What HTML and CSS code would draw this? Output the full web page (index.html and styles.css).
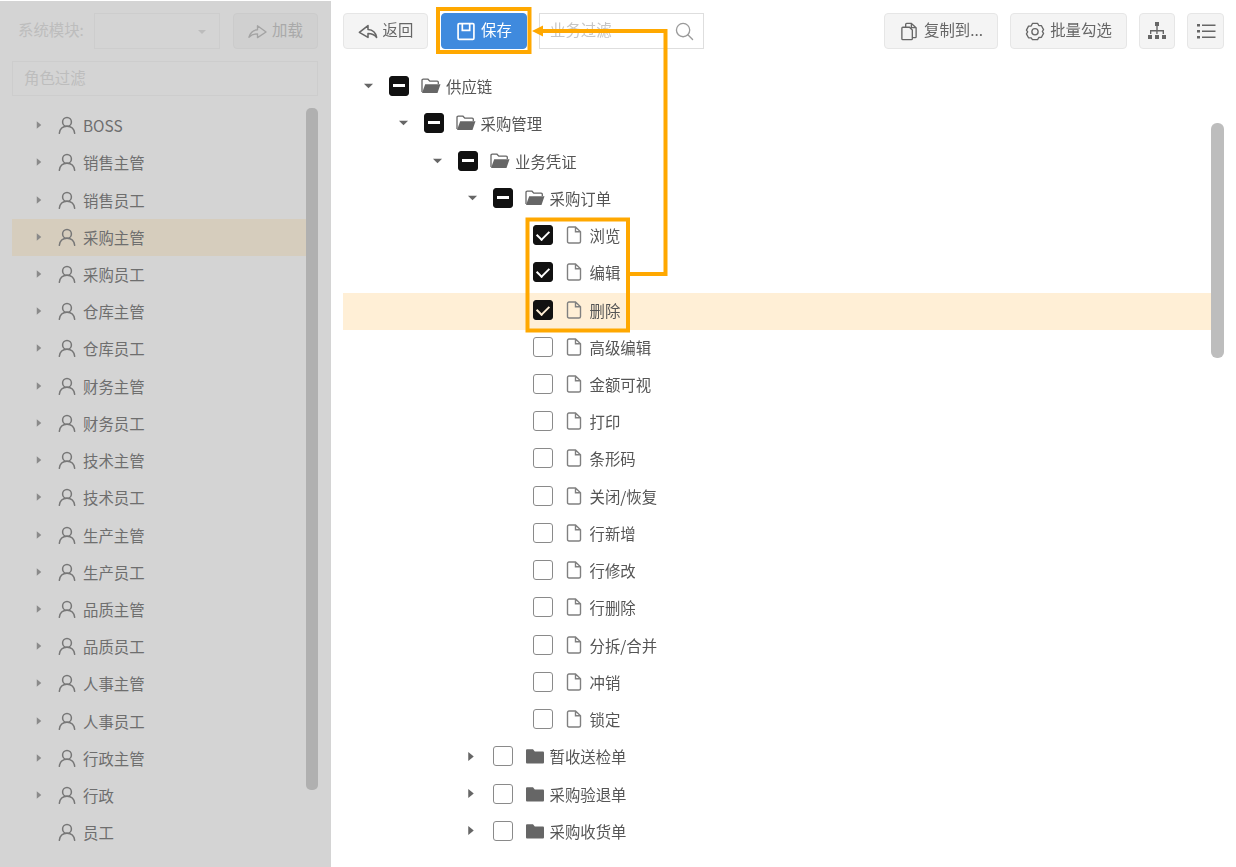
FILE: index.html
```html
<!DOCTYPE html>
<html lang="zh-CN">
<head>
<meta charset="utf-8">
<title>权限设置</title>
<link rel="stylesheet" href="styles.css">
</head>
<body>
<svg class="defs" width="0" height="0">
  <symbol id="user" viewBox="0 0 20 20"><circle cx="10" cy="6.600" r="4.900" fill="none" stroke="currentColor" stroke-width="1.700"/><path d="M1.500 19.200c.6-5 3.800-7.800 8.500-7.800s7.900 2.800 8.500 7.800" fill="none" stroke="currentColor" stroke-width="1.700" stroke-linecap="round"/></symbol>
  <symbol id="right" viewBox="0 0 8 12"><path d="M1 1 7 6l-6 5z" fill="currentColor"/></symbol>
  <symbol id="down" viewBox="0 0 12 8"><path d="M1 1.500h10L6 6.500z" fill="currentColor"/></symbol>
  <symbol id="open" viewBox="0 0 20 16"><path d="M1 14V2.500C1 1.700 1.500 1.200 2.300 1.200H7l1.800 2h7.400c.7 0 1.100.4 1.100 1.100V6" fill="none" stroke="currentColor" stroke-width="1.300"/><path d="M1 15 4.200 6.300h15.300L16.500 15z" fill="currentColor"/></symbol>
  <symbol id="closed" viewBox="0 0 20 16"><path d="M1 2.500c0-.8.500-1.300 1.300-1.300H8l1.800 2.200h7.900c.8 0 1.300.5 1.300 1.300v9.500c0 .8-.5 1.300-1.300 1.300H2.300c-.8 0-1.300-.5-1.300-1.300z" fill="currentColor"/></symbol>
  <symbol id="doc" viewBox="0 0 16 18"><path d="M3 1h6.500L14.500 5.800V15.500c0 .9-.6 1.500-1.500 1.500H3c-.9 0-1.500-.6-1.500-1.500V2.500C1.500 1.600 2.100 1 3 1zM9.500 1v4.800h5" fill="none" stroke="currentColor" stroke-width="1.400"/></symbol>
  <symbol id="share" viewBox="0 0 22 18"><path d="M1.500 10 11 2.500v4.200c5 .3 8.500 3 9.500 8.800-2.500-3.200-5.500-4.300-9.500-4.300v4.300z" fill="none" stroke="currentColor" stroke-width="1.700" stroke-linejoin="round"/></symbol>
</svg>

<div class="app">
  <aside class="side">
    <div class="side-bar">
      <span class="side-label">系统模块:</span>
      <span class="side-select"><i class="select-caret"></i></span>
      <button class="side-btn"><svg class="ic-load" viewBox="0 0 20 16"><path d="M1 14.500c1.500-5 4.500-7.500 9-7.800V2.500l9 6.500-9 6v-4c-3.500 0-6.500 1-9 3.500z" fill="none" stroke="currentColor" stroke-width="1.400" stroke-linejoin="round"/></svg><span class="lift">加载</span></button>
    </div>
    <div class="side-filter">角色过滤</div>
    <ul class="roles">
      <li class="role"><svg class="r-caret"><use href="#right"/></svg><svg class="r-user"><use href="#user"/></svg>BOSS</li>
      <li class="role"><svg class="r-caret"><use href="#right"/></svg><svg class="r-user"><use href="#user"/></svg>销售主管</li>
      <li class="role"><svg class="r-caret"><use href="#right"/></svg><svg class="r-user"><use href="#user"/></svg>销售员工</li>
      <li class="role role-on"><svg class="r-caret"><use href="#right"/></svg><svg class="r-user"><use href="#user"/></svg>采购主管</li>
      <li class="role"><svg class="r-caret"><use href="#right"/></svg><svg class="r-user"><use href="#user"/></svg>采购员工</li>
      <li class="role"><svg class="r-caret"><use href="#right"/></svg><svg class="r-user"><use href="#user"/></svg>仓库主管</li>
      <li class="role"><svg class="r-caret"><use href="#right"/></svg><svg class="r-user"><use href="#user"/></svg>仓库员工</li>
      <li class="role"><svg class="r-caret"><use href="#right"/></svg><svg class="r-user"><use href="#user"/></svg>财务主管</li>
      <li class="role"><svg class="r-caret"><use href="#right"/></svg><svg class="r-user"><use href="#user"/></svg>财务员工</li>
      <li class="role"><svg class="r-caret"><use href="#right"/></svg><svg class="r-user"><use href="#user"/></svg>技术主管</li>
      <li class="role"><svg class="r-caret"><use href="#right"/></svg><svg class="r-user"><use href="#user"/></svg>技术员工</li>
      <li class="role"><svg class="r-caret"><use href="#right"/></svg><svg class="r-user"><use href="#user"/></svg>生产主管</li>
      <li class="role"><svg class="r-caret"><use href="#right"/></svg><svg class="r-user"><use href="#user"/></svg>生产员工</li>
      <li class="role"><svg class="r-caret"><use href="#right"/></svg><svg class="r-user"><use href="#user"/></svg>品质主管</li>
      <li class="role"><svg class="r-caret"><use href="#right"/></svg><svg class="r-user"><use href="#user"/></svg>品质员工</li>
      <li class="role"><svg class="r-caret"><use href="#right"/></svg><svg class="r-user"><use href="#user"/></svg>人事主管</li>
      <li class="role"><svg class="r-caret"><use href="#right"/></svg><svg class="r-user"><use href="#user"/></svg>人事员工</li>
      <li class="role"><svg class="r-caret"><use href="#right"/></svg><svg class="r-user"><use href="#user"/></svg>行政主管</li>
      <li class="role"><svg class="r-caret"><use href="#right"/></svg><svg class="r-user"><use href="#user"/></svg>行政</li>
      <li class="role"><span class="r-caret"></span><svg class="r-user"><use href="#user"/></svg>员工</li>
    </ul>
    <div class="side-scroll"></div>
  </aside>

  <main class="main">
    <div class="toolbar">
      <button class="btn btn-back"><svg class="ic" viewBox="0 0 22 18"><use href="#share"/></svg><span class="lift">返回</span></button>
      <button class="btn btn-save"><svg class="ic" viewBox="0 0 18 18"><path d="M2.500 1.500h13c.6 0 1 .4 1 1v13c0 .6-.4 1-1 1h-13c-.6 0-1-.4-1-1v-13c0-.6.400-1 1-1zM5.500 1.500v6.500h7V1.500" fill="none" stroke="currentColor" stroke-width="1.600"/></svg><span class="lift">保存</span></button>
      <div class="search"><span class="search-ph lift">业务过滤</span><svg class="ic-search" viewBox="0 0 20 20"><circle cx="8.500" cy="8.500" r="7" fill="none" stroke="currentColor" stroke-width="1.400"/><path d="m13.500 13.500 5 5" stroke="currentColor" stroke-width="1.400" stroke-linecap="round"/></svg></div>
      <span class="spacer"></span>
      <button class="btn btn-copy"><svg class="ic" viewBox="0 0 18 20"><path d="M2.500 5.500h7l3 3v9c0 .6-.4 1-1 1h-9c-.6 0-1-.4-1-1v-11c0-.6.400-1 1-1zM5.500 5V2.500c0-.6.400-1 1-1h5l5 4.500v9.500c0 .6-.4 1-1 1h-3.500M11.500 1.500V6h5" fill="none" stroke="currentColor" stroke-width="1.400"/></svg><span class="lift">复制到...</span></button>
      <button class="btn btn-batch"><svg class="ic" viewBox="0 0 20 20"><path d="M7.300 1.500h5.400l1.300 2.200 2.800.2 2.200 4.100-1.300 2 1.300 2-2.200 4.100-2.800.2-1.300 2.200H7.300L6 16.800l-2.800-.2L1 12.500 2.300 10.500 1 8.500 3.200 4.400 6 4.200z" fill="none" stroke="currentColor" stroke-width="1.400" stroke-linejoin="round"/><circle cx="10" cy="10.300" r="3.300" fill="none" stroke="currentColor" stroke-width="1.400"/></svg><span class="lift">批量勾选</span></button>
      <button class="btn btn-icon btn-org"><svg class="ic-tool" viewBox="0 0 20 18"><path d="M8 0h4v4H8zM1 13h4v4H1zM8 13h4v4H8zM15 13h4v4h-4zM9.300 4h1.400v4H17v4h-1.400V9.400h-5V12H9.300V9.400h-5V12H3V8h6.300z" fill="currentColor"/></svg></button>
      <button class="btn btn-icon"><svg class="ic-tool" viewBox="0 0 20 18"><path d="M1 2h3v2.500H1zM6 2.500h13.500v1.500H6zM1 8h3v2.500H1zM6 8.500h13.500V10H6zM1 14h3v2.500H1zM6 14.500h13.500V16H6z" fill="currentColor"/></svg></button>
    </div>

    <ul class="tree">
      <li class="node l0"><svg class="t-caret"><use href="#down"/></svg><span class="cb cb-mid"></span><svg class="t-folder"><use href="#open"/></svg>供应链</li>
      <li class="node l1"><svg class="t-caret"><use href="#down"/></svg><span class="cb cb-mid"></span><svg class="t-folder"><use href="#open"/></svg>采购管理</li>
      <li class="node l2"><svg class="t-caret"><use href="#down"/></svg><span class="cb cb-mid"></span><svg class="t-folder"><use href="#open"/></svg>业务凭证</li>
      <li class="node l3"><svg class="t-caret"><use href="#down"/></svg><span class="cb cb-mid"></span><svg class="t-folder"><use href="#open"/></svg>采购订单</li>
      <li class="node leaf"><span class="cb cb-on"></span><svg class="t-doc"><use href="#doc"/></svg>浏览</li>
      <li class="node leaf"><span class="cb cb-on"></span><svg class="t-doc"><use href="#doc"/></svg>编辑</li>
      <li class="node leaf node-on"><span class="cb cb-on"></span><svg class="t-doc"><use href="#doc"/></svg>删除</li>
      <li class="node leaf"><span class="cb"></span><svg class="t-doc"><use href="#doc"/></svg>高级编辑</li>
      <li class="node leaf"><span class="cb"></span><svg class="t-doc"><use href="#doc"/></svg>金额可视</li>
      <li class="node leaf"><span class="cb"></span><svg class="t-doc"><use href="#doc"/></svg>打印</li>
      <li class="node leaf"><span class="cb"></span><svg class="t-doc"><use href="#doc"/></svg>条形码</li>
      <li class="node leaf"><span class="cb"></span><svg class="t-doc"><use href="#doc"/></svg>关闭/恢复</li>
      <li class="node leaf"><span class="cb"></span><svg class="t-doc"><use href="#doc"/></svg>行新增</li>
      <li class="node leaf"><span class="cb"></span><svg class="t-doc"><use href="#doc"/></svg>行修改</li>
      <li class="node leaf"><span class="cb"></span><svg class="t-doc"><use href="#doc"/></svg>行删除</li>
      <li class="node leaf"><span class="cb"></span><svg class="t-doc"><use href="#doc"/></svg>分拆/合并</li>
      <li class="node leaf"><span class="cb"></span><svg class="t-doc"><use href="#doc"/></svg>冲销</li>
      <li class="node leaf"><span class="cb"></span><svg class="t-doc"><use href="#doc"/></svg>锁定</li>
      <li class="node l3"><svg class="t-caret t-caret-r"><use href="#right"/></svg><span class="cb"></span><svg class="t-folder"><use href="#closed"/></svg>暂收送检单</li>
      <li class="node l3"><svg class="t-caret t-caret-r"><use href="#right"/></svg><span class="cb"></span><svg class="t-folder"><use href="#closed"/></svg>采购验退单</li>
      <li class="node l3"><svg class="t-caret t-caret-r"><use href="#right"/></svg><span class="cb"></span><svg class="t-folder"><use href="#closed"/></svg>采购收货单</li>
    </ul>
    <div class="main-scroll"></div>
  </main>
</div>

<svg class="marks" viewBox="0 0 1236 867">
  <rect x="438" y="9" width="91.500" height="43" fill="none" stroke="#ffa800" stroke-width="4"/>
  <rect x="527.500" y="219.500" width="100.500" height="111" fill="none" stroke="#ffa800" stroke-width="4"/>
  <path d="M630 274H665.500V31H542" fill="none" stroke="#ffa800" stroke-width="4"/>
  <path d="M532 31 543 25.500V36.500z" fill="#ffa800"/>
</svg>
</body>
</html>
```
FILE: styles.css
```css
* { box-sizing: border-box; }
html, body { margin: 0; padding: 0; }
body {
  width: 1236px;
  height: 867px;
  overflow: hidden;
  background: #fff;
  font-family: "Noto Sans CJK SC", "Noto Sans", sans-serif;
  font-size: 15.400px;
  color: #555;
}
ul { list-style: none; margin: 0; padding: 0; }
button { font: inherit; cursor: pointer; }
.defs { position: absolute; }
.app { display: flex; height: 866px; margin-top: 1px; filter: blur(0.35px); }
.lift { margin-bottom: 4px; }

/* left panel (dimmed) */
.side {
  position: relative;
  flex: 0 0 331px;
  background: #d4d4d4;
  padding: 12px 13px 0 12px;
  color: #6e6e6e;
}
.side-bar { display: flex; align-items: center; height: 36px; }
.side-label { width: 82px; padding: 0 0 5px 6px; color: #bdbdbd; white-space: nowrap; }
.side-select {
  position: relative;
  width: 126px;
  height: 36px;
  border: 1px solid #cdcdcd;
}
.select-caret {
  position: absolute;
  right: 13px;
  top: 16px;
  border: 4px solid transparent;
  border-top: 4px solid #bcbcbc;
}
.side-btn {
  display: flex;
  align-items: center;
  justify-content: center;
  gap: 5px;
  width: 85px;
  height: 36px;
  margin-left: 13px;
  background: #d0d0d0;
  border: 1px solid #cbcbcb;
  border-radius: 4px;
  color: #a9a9a9;
  padding: 0;
}
.ic-load { width: 19px; height: 16px; color: #a3a3a3; }
.side-filter {
  height: 35px;
  margin-top: 12px;
  padding-left: 11px;
  line-height: 31px;
  border: 1px solid #cdcdcd;
  color: #bdbdbd;
}
.roles { margin-top: 11px; }
.role {
  display: flex;
  align-items: center;
  height: 37.220px;
  width: 294px;
  padding: 0 0 1px 24px;
}
.role-on { background: #d6cdbd; }
.r-caret { flex: none; width: 6px; height: 10px; color: #8a8a8a; }
.r-user { flex: none; width: 18px; height: 18px; margin: 0 7px 0 16px; color: #777; }
.side-scroll {
  position: absolute;
  left: 306px;
  top: 107px;
  width: 12px;
  height: 682px;
  border-radius: 5px;
  background: #b0b0b0;
}

/* right panel */
.main { position: relative; flex: 1; padding: 12px 12px 0 12px; }
.toolbar { display: flex; align-items: stretch; height: 36px; }
.spacer { flex: 1; }
.btn {
  display: flex;
  align-items: center;
  justify-content: center;
  gap: 5px;
  height: 36px;
  padding: 0;
  background: #f4f4f4;
  border: 1px solid #e6e6e6;
  border-radius: 4px;
  color: #666;
}
.ic { width: 20px; height: 19px; flex: none; }
.btn-back { width: 85px; }
.btn-save {
  width: 86px;
  margin-left: 13px;
  background: #3f8ade;
  border-color: #3f8ade;
  color: #fff;
}
.search {
  display: flex;
  align-items: center;
  justify-content: space-between;
  width: 165px;
  margin-left: 12px;
  padding: 0 9px 0 10px;
  border: 1px solid #dedede;
}
.search-ph { color: #c6c6c6; }
.ic-search { width: 19px; height: 19px; color: #9a9a9a; }
.btn-copy { width: 114px; }
.btn-batch { width: 117px; margin-left: 12px; }
.btn-icon { width: 37px; margin-left: 12px; }
.btn-org { width: 36px; }
.ic-tool { width: 20px; height: 18px; color: #666; }

.tree { margin-top: 20.500px; width: 868px; }
.node {
  display: flex;
  align-items: center;
  height: 37.240px;
  padding-bottom: 4px;
}
.node-on { background: #ffefd6; }
.l0 { padding-left: 20px; }
.l1 { padding-left: 54.500px; }
.l2 { padding-left: 89px; }
.l3 { padding-left: 123.500px; }
.leaf { padding-left: 190px; }
.t-caret { flex: none; width: 11px; height: 8px; color: #666; margin-right: 15px; }
.t-caret-r { width: 8px; height: 11px; margin-right: 18px; }
.cb {
  position: relative;
  flex: none;
  width: 20px;
  height: 20px;
  border: 1.500px solid #8a8a8a;
  border-radius: 3px;
  background: #fff;
}
.cb-mid, .cb-on { background: #111; border-color: #111; }
.cb-mid::after {
  content: "";
  position: absolute;
  left: 3px;
  right: 3px;
  top: 7px;
  height: 3px;
  background: #fff;
}
.cb-on::after {
  content: "";
  position: absolute;
  left: 5px;
  top: 2px;
  width: 6px;
  height: 10px;
  border: solid #fff;
  border-width: 0 2.500px 2.500px 0;
  transform: rotate(45deg);
}
.node-on .cb-on::after { border-color: #ffefd6; }
.t-folder { flex: none; width: 20px; height: 16px; margin: 0 5px 0 12px; color: #666; }
.t-doc { flex: none; width: 16px; height: 18px; margin: 0 7.500px 0 13px; color: #808080; }
.main-scroll {
  position: absolute;
  left: 880px;
  top: 122px;
  width: 13px;
  height: 235px;
  border-radius: 6px;
  background: #bdbdbd;
}

/* annotations drawn over the screen */
.marks { position: absolute; left: 0; top: 0; width: 1236px; height: 867px; pointer-events: none; }
```
